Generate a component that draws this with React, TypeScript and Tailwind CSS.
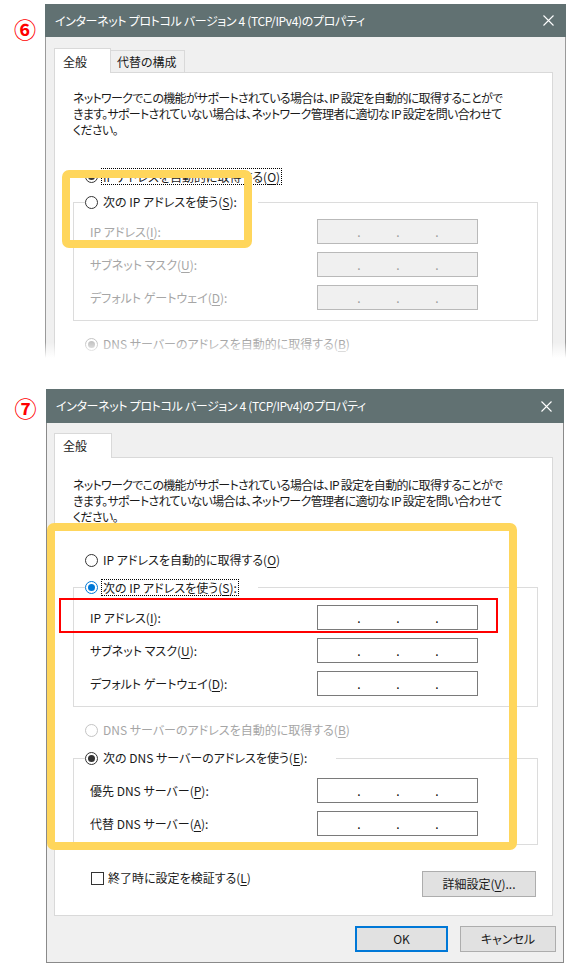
import React from "react";

function K({ c }: { c: string }) {
  return (
    <>
      (<span className="underline underline-offset-[2px] decoration-1">{c}</span>)
    </>
  );
}

function Radio({ checked, disabled, blue }: { checked?: boolean; disabled?: boolean; blue?: boolean }) {
  const ring = disabled ? "border-[#c4c4c4]" : blue ? "border-[#0078d7]" : "border-[#333333]";
  const dot = disabled ? "bg-[#c4c4c4]" : blue ? "bg-[#0078d7]" : "bg-[#333333]";
  return (
    <span className={`flex h-[13px] w-[13px] shrink-0 items-center justify-center rounded-full border bg-white ${ring}`}>
      {checked && <span className={`block h-[7px] w-[7px] rounded-full ${dot}`} />}
    </span>
  );
}

function RadioLabel({
  children,
  checked,
  disabled,
  blue,
  focus,
}: {
  children: React.ReactNode;
  checked?: boolean;
  disabled?: boolean;
  blue?: boolean;
  focus?: boolean;
}) {
  return (
    <div className={`flex h-[16px] items-center gap-[4px] whitespace-nowrap ${disabled ? "text-[#a6a6a6]" : ""}`}>
      <Radio checked={checked} disabled={disabled} blue={blue} />
      <span className={focus ? "px-[1px] leading-[15px] outline-1 outline-dotted outline-black" : "px-[1px]"}>{children}</span>
    </div>
  );
}

function IpBox({ disabled }: { disabled?: boolean }) {
  return (
    <div
      className={`flex h-[25px] w-[161px] gap-[27px] border pl-[35px] leading-[23px] ${
        disabled ? "border-[#b9b9b9] bg-[#f0f0f0] text-[#9a9a9a]" : "border-[#7a7a7a] bg-white text-black"
      }`}
    >
      <span className="w-[12px] text-center">.</span>
      <span className="w-[12px] text-center">.</span>
      <span className="w-[12px] text-center">.</span>
    </div>
  );
}

function FieldRow({ label, disabled }: { label: React.ReactNode; disabled?: boolean }) {
  return (
    <div className="flex h-[25px] items-center">
      <span className={`w-[227px] whitespace-nowrap ${disabled ? "text-[#a6a6a6]" : ""}`}>{label}</span>
      <IpBox disabled={disabled} />
    </div>
  );
}

function Group({
  legend,
  legendPr,
  innerPt,
  innerPb,
  children,
}: {
  legend: React.ReactNode;
  legendPr: string;
  innerPt: string;
  innerPb: string;
  children: React.ReactNode;
}) {
  return (
    <fieldset className="border border-[#dcdcdc]">
      <legend className={`ml-[11px] ${legendPr}`}>{legend}</legend>
      <div className={`flex flex-col gap-[8px] pl-[16px] ${innerPt} ${innerPb}`}>{children}</div>
    </fieldset>
  );
}

function CloseX() {
  return (
    <svg width="11" height="11" viewBox="0 0 11 11" className="shrink-0">
      <path d="M0.5 0.5 L10.5 10.5 M10.5 0.5 L0.5 10.5" stroke="#ffffff" strokeWidth="1.1" fill="none" />
    </svg>
  );
}

function TitleBar({ h }: { h: string }) {
  return (
    <div className={`flex ${h} items-center justify-between bg-[#617172] pl-[10px] pr-[12px] text-white`}>
      <span className="whitespace-nowrap tracking-[-0.35px]">インターネット プロトコル バージョン 4 (TCP/IPv4)のプロパティ</span>
      <CloseX />
    </div>
  );
}

function Desc() {
  return (
    <p className="whitespace-nowrap leading-[16px] tracking-[-0.7px]">
      ネットワークでこの機能がサポートされている場合は、IP 設定を自動的に取得することがで
      <br />
      きます。サポートされていない場合は、ネットワーク管理者に適切な IP 設定を問い合わせて
      <br />
      ください。
    </p>
  );
}

function Window6() {
  return (
    <div className="relative h-[354px] w-[521px] overflow-hidden">
      <TitleBar h="h-[33px]" />
      <div className="h-[321px] border-x border-[#9a9a9a] bg-[#f0f0f0] pl-[8px] pt-[11px]">
        <div className="flex items-end">
          <div className="relative z-10 -mb-px h-[25px] w-[57px] border-x border-t border-[#d9d9d9] bg-white pl-[8px] leading-[26px]">
            全般
          </div>
          <div className="h-[22px] w-[74px] border-r border-t border-[#d9d9d9] bg-[#f0f0f0] pl-[6px] leading-[22px]">
            代替の構成
          </div>
        </div>
        <div className="h-[300px] w-[499px] border border-[#d9d9d9] bg-white pl-[18px] pr-[14px] pt-[17px]">
          <Desc />
          <div className="mt-[30px] pl-[12px]">
            <RadioLabel checked focus>
              IP アドレスを自動的に取得する<K c="O" />
            </RadioLabel>
          </div>
          <div className="mt-[10px]">
            <Group
              legendPr="pr-[20px]"
              innerPt="pt-[9px]"
              innerPb="pb-[10px]"
              legend={
                <RadioLabel>
                  次の IP アドレスを使う<K c="S" />:
                </RadioLabel>
              }
            >
              <FieldRow disabled label={<>IP アドレス<K c="I" />:</>} />
              <FieldRow disabled label={<>サブネット マスク<K c="U" />:</>} />
              <FieldRow disabled label={<>デフォルト ゲートウェイ<K c="D" />:</>} />
            </Group>
          </div>
          <div className="mt-[15px] pl-[12px]">
            <RadioLabel checked disabled>
              DNS サーバーのアドレスを自動的に取得する<K c="B" />
            </RadioLabel>
          </div>
        </div>
      </div>
      <div className="absolute bottom-0 left-0 h-[16px] w-full bg-gradient-to-b from-white/0 to-white" />
    </div>
  );
}

function Window7() {
  return (
    <div className="w-[518px]">
      <TitleBar h="h-[34px]" />
      <div className="border-x border-b border-[#8a8a8a] bg-[#f0f0f0]">
        <div className="pl-[7px] pt-[10px]">
          <div className="flex items-end">
            <div className="relative z-10 -mb-px h-[25px] w-[58px] border-x border-t border-[#d9d9d9] bg-white pl-[8px] leading-[24px]">
              全般
            </div>
          </div>
          <div className="w-[499px] border border-[#d9d9d9] bg-white pb-[18px] pl-[18px] pr-[14px] pt-[19px]">
            <Desc />
            <div className="mt-[27px] pl-[12px]">
              <RadioLabel>
                IP アドレスを自動的に取得する<K c="O" />
              </RadioLabel>
            </div>
            <div className="mt-[11px]">
              <Group
                legendPr="pr-[20px]"
                innerPt="pt-[10px]"
                innerPb="pb-[10px]"
                legend={
                  <RadioLabel checked blue focus>
                    次の IP アドレスを使う<K c="S" />:
                  </RadioLabel>
                }
              >
                <FieldRow label={<>IP アドレス<K c="I" />:</>} />
                <FieldRow label={<>サブネット マスク<K c="U" />:</>} />
                <FieldRow label={<>デフォルト ゲートウェイ<K c="D" />:</>} />
              </Group>
            </div>
            <div className="mt-[15px] pl-[12px]">
              <RadioLabel disabled>
                DNS サーバーのアドレスを自動的に取得する<K c="B" />
              </RadioLabel>
            </div>
            <div className="mt-[12px]">
              <Group
                legendPr="pr-[28px]"
                innerPt="pt-[12px]"
                innerPb="pb-[8px]"
                legend={
                  <RadioLabel checked>
                    次の DNS サーバーのアドレスを使う<K c="E" />:
                  </RadioLabel>
                }
              >
                <FieldRow label={<>優先 DNS サーバー<K c="P" />:</>} />
                <FieldRow label={<>代替 DNS サーバー<K c="A" />:</>} />
              </Group>
            </div>
            <div className="mt-[26px] flex h-[26px] items-start justify-between pr-[2px]">
              <div className="-mt-px flex h-[16px] items-center gap-[4px] pl-[18px]">
                <span className="block h-[13px] w-[13px] border border-[#333333] bg-white" />
                <span className="whitespace-nowrap">
                  終了時に設定を検証する<K c="L" />
                </span>
              </div>
              <button className="h-[26px] w-[114px] whitespace-nowrap border border-[#adadad] bg-[#e1e1e1]">
                詳細設定<K c="V" />...
              </button>
            </div>
          </div>
        </div>
        <div className="flex justify-end gap-[12px] pb-[10px] pr-[7px] pt-[10px]">
          <button className="h-[26px] w-[93px] border-2 border-[#0078d7] bg-[#e1e1e1]">OK</button>
          <button className="h-[26px] w-[96px] border border-[#adadad] bg-[#e1e1e1]">キャンセル</button>
        </div>
      </div>
    </div>
  );
}

function Num({ children }: { children: React.ReactNode }) {
  return <span className="block text-[22px] font-bold leading-[22px] text-[#ff0000]">{children}</span>;
}

export default function App() {
  return (
    <div className="relative h-[972px] w-[571px] overflow-hidden bg-white text-[12px] text-[#1a1a1a] [font-family:'Noto_Sans_CJK_JP','Noto_Sans',sans-serif] [font-feature-settings:'palt']">
      <div className="flex pt-[4px]">
        <div className="flex w-[45px] justify-center pl-[5px] pt-[13px]">
          <Num>⑥</Num>
        </div>
        <Window6 />
      </div>
      <div className="mt-[31px] flex">
        <div className="flex w-[46px] justify-center pl-[5px] pt-[7px]">
          <Num>⑦</Num>
        </div>
        <Window7 />
      </div>
      <div className="absolute left-[62px] top-[170px] h-[78px] w-[190px] rounded-[7px] border-[8px] border-[#ffd65c]" />
      <div className="absolute left-[47px] top-[523px] h-[327px] w-[470px] rounded-[7px] border-[8px] border-[#ffd65c]" />
      <div className="absolute left-[59px] top-[598px] h-[35px] w-[439px] border-2 border-[#ff0000]" />
    </div>
  );
}
